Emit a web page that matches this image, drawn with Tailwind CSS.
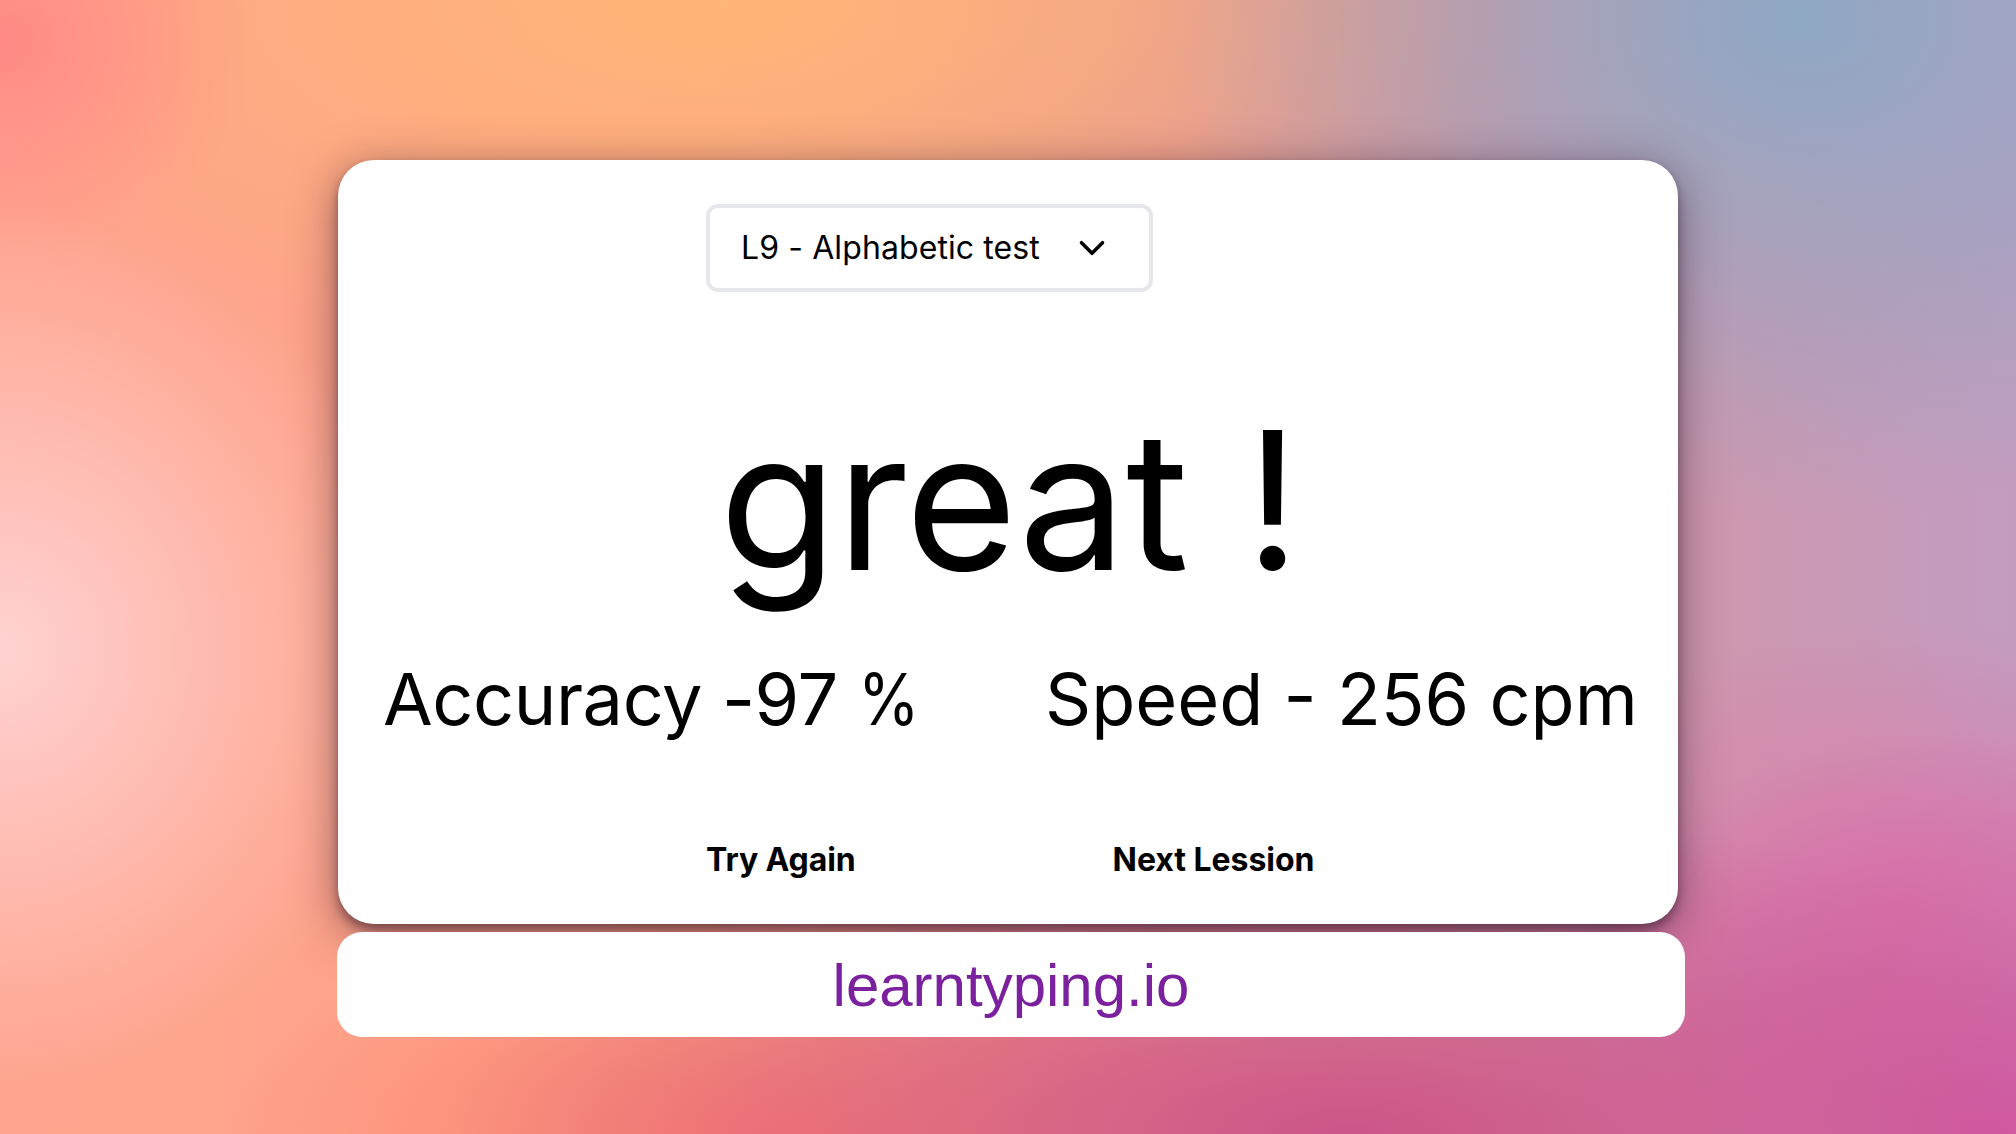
<!DOCTYPE html>
<html lang="en">
<head>
    <meta charset="UTF-8">
    <title>learntyping.io</title>
    <script src="https://cdn.jsdelivr.net/npm/@tailwindcss/browser@4"></script>
</head>
<body class="w-[2016px] h-[1134px] overflow-hidden font-['Inter',sans-serif] text-black bg-[radial-gradient(ellipse_420px_440px_at_0px_650px,#ffd2d2_0%,#ffd2d200_100%),radial-gradient(ellipse_260px_220px_at_0px_40px,#ff8a86_0%,#ff8a8600_100%),radial-gradient(ellipse_640px_500px_at_1800px_20px,#8ea8c4_0%,#8ea8c400_100%),radial-gradient(ellipse_850px_360px_at_720px_0px,#ffb678_0%,#ffb67800_100%),radial-gradient(ellipse_900px_330px_at_1350px_1134px,#cc5588_0%,#cc558800_100%),radial-gradient(ellipse_520px_400px_at_1990px_1130px,#d05aa8_0%,#d05aa800_100%),radial-gradient(ellipse_560px_220px_at_780px_1134px,#fa7e6e_0%,#fa7e6e00_100%),radial-gradient(ellipse_400px_280px_at_1900px_900px,#dc7ca8_0%,#dc7ca800_100%),linear-gradient(90deg,#ffa48e_0%,#fda184_35%,#d9929c_70%,#c29cc0_100%)]">
    <div class="pt-[160px] pl-[338px]">
        <!-- main card -->
        <div class="w-[1340px] h-[764px] bg-white rounded-[36px] shadow-[0_10px_45px_rgba(40,20,40,0.5),0_6px_10px_rgba(40,10,30,0.4)] flex flex-col">
            <div class="mt-[44px] ml-[368px] w-[447px] h-[88px] border-4 border-[#e5e7eb] rounded-xl flex items-center justify-between pl-[31px] pr-[39px]">
                <span class="text-[32px] tracking-[0.1px]">L9 - Alphabetic test</span>
                <svg class="w-[36px] h-[36px]" viewBox="0 0 24 24" fill="none" stroke="black" stroke-width="2.4" stroke-linecap="round" stroke-linejoin="round"><path d="M5 8.5l7 7 7-7"/></svg>
            </div>
            <h1 class="mt-[92px] text-center text-[192px] leading-[232px] ml-[3px] font-[420] tracking-[-0.4px] [word-spacing:3px]">great !</h1>
            <div class="mt-[39px] flex text-[72px] leading-[88px] pl-[45px] font-[430]">
                <span class="tracking-[-0.4px]">Accuracy -97 <span class="inline-block origin-left scale-x-[0.87]">%</span></span>
                <span class="ml-[117px]">Speed - 256 cpm</span>
            </div>
            <div class="mt-[97px] flex text-[32px] leading-[40px] font-bold pl-[368px]">
                <span class="tracking-[-0.1px]">Try Again</span>
                <span class="ml-[257px] tracking-[-0.05px]">Next Lession</span>
            </div>
        </div>
        <!-- footer strip -->
        <div class="mt-[8px] -ml-px w-[1348px] h-[105px] pt-[2px] bg-white rounded-[25px] flex justify-center items-center font-['Liberation_Sans',sans-serif] text-[60px] text-[#7b219f]">
            learntyping.io
        </div>
    </div>
</body>
</html>
